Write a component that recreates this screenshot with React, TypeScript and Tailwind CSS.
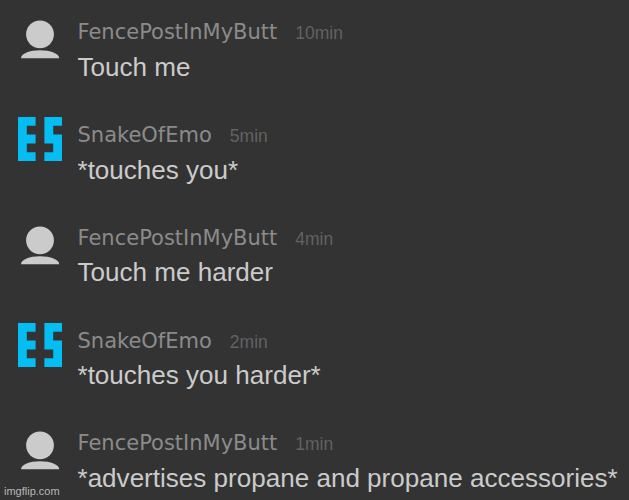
import React from 'react';

type Comment = {
  user: string;
  time: string;
  text: string;
  pixel?: boolean;
};

const comments: Comment[] = [
  { user: 'FencePostInMyButt', time: '10min', text: 'Touch me' },
  { user: 'SnakeOfEmo', time: '5min', text: '*touches you*', pixel: true },
  { user: 'FencePostInMyButt', time: '4min', text: 'Touch me harder' },
  { user: 'SnakeOfEmo', time: '2min', text: '*touches you harder*', pixel: true },
  { user: 'FencePostInMyButt', time: '1min', text: '*advertises propane and propane accessories*' },
];

function PersonIcon() {
  return (
    <svg width="40" height="40" viewBox="0 0 40 40" className="ml-5 mt-5 block" fill="#cbcbcb">
      <circle cx="20" cy="14.3" r="13.9" />
      <path d="M1 38.3C1 33.6 9.5 30.3 20 30.3s19.2 3.3 19.2 8z" />
    </svg>
  );
}

function PixelIcon() {
  return (
    <svg width="44" height="44" viewBox="0 0 5 5" className="ml-[18px] mt-[14.5px] block" fill="#04bdf2">
      <path d="M0 0h2v1H1v1h1v1H1v1h1v1H0z" />
      <path d="M3 0h2v1H4v1h1v3H3V4h1V3H3z" />
    </svg>
  );
}

function CommentRow({ user, time, text, pixel }: Comment) {
  return (
    <div className="flex h-[102.75px] shrink-0">
      <div className="w-[77.5px] shrink-0">{pixel ? <PixelIcon /> : <PersonIcon />}</div>
      <div className="whitespace-nowrap pt-[19.4px]">
        <div className="flex items-baseline leading-[26px]">
          <span className="font-['DejaVu_Sans',sans-serif] text-[21px] text-[#8b8b8b]">{user}</span>
          <span className="ml-[18px] font-['Liberation_Sans',sans-serif] text-[17.5px] text-[#626262]">{time}</span>
        </div>
        <p className="mt-[5.6px] font-['Liberation_Sans',sans-serif] text-[26.05px] leading-[30px] text-[#cbcbcb]">{text}</p>
      </div>
    </div>
  );
}

export default function App() {
  return (
    <div className="relative h-[500px] w-[629px] overflow-hidden bg-[#333333]">
      <div className="flex flex-col">
        {comments.map((comment, i) => (
          <CommentRow key={i} {...comment} />
        ))}
      </div>
      <span className="absolute bottom-[2px] left-[4px] font-['Liberation_Sans',sans-serif] text-[11px] leading-[14px] text-[#b8b8b8]">
        imgflip.com
      </span>
    </div>
  );
}
